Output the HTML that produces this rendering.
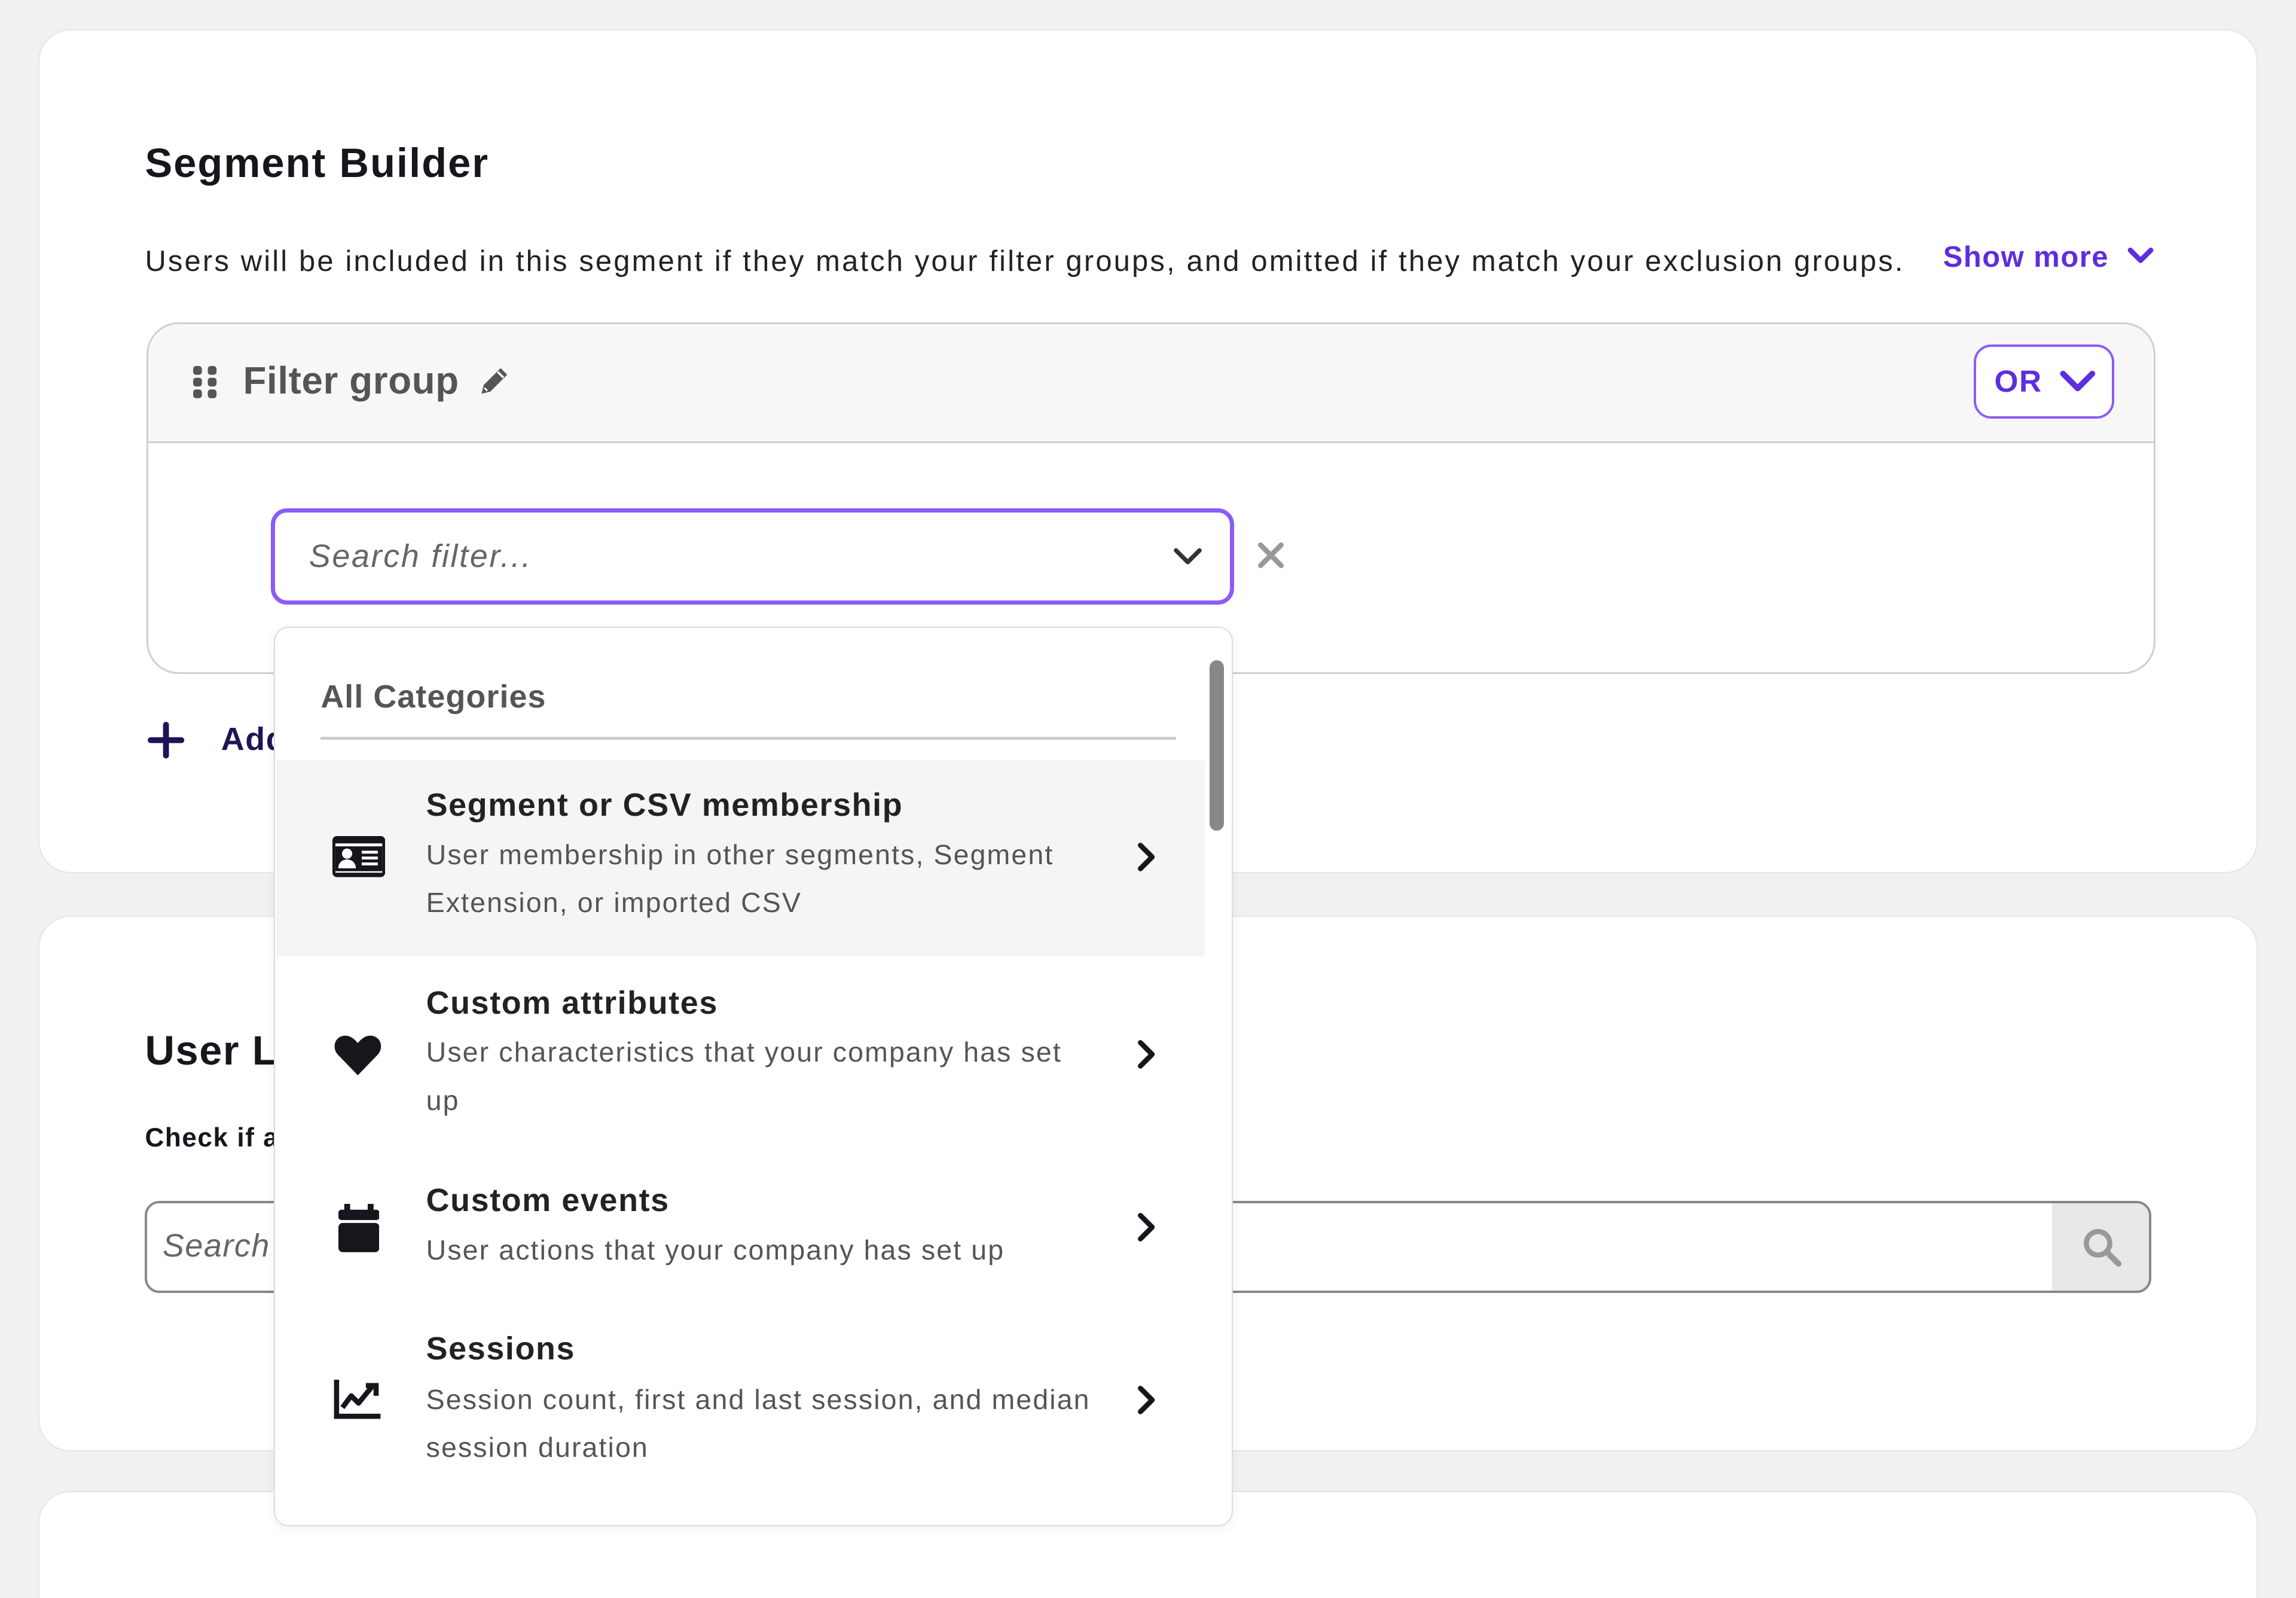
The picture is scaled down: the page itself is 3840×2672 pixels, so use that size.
<!DOCTYPE html>
<html><head><meta charset="utf-8"><style>
html,body{margin:0;padding:0;background:#f1f1f3;width:3840px;height:2672px;overflow:hidden}
#w{position:absolute;left:0;top:0;width:1568px;height:1091px;overflow:hidden;zoom:2.44898;font-family:"Liberation Sans",sans-serif;color:#16161d;letter-spacing:0.04em}
.a{position:absolute}
.card{position:absolute;left:26px;width:1516px;background:#fff;border:1px solid #e4e4e8;border-radius:22px;box-sizing:border-box}
.t{position:absolute;white-space:nowrap}
.it-t{font-size:22px;font-weight:bold;color:#222;letter-spacing:0.03em}
.it-d{font-size:19px;color:#555;line-height:33px;letter-spacing:0.045em}
</style></head><body><div id="w">
<div class="card" style="top:20px;height:576px"></div>
<div class="card" style="top:625px;height:366px"></div>
<div class="card" style="top:1018px;height:120px"></div>

<div class="t" style="left:99px;top:95px;font-size:28px;font-weight:bold;letter-spacing:0.03em">Segment Builder</div>
<div class="t" style="left:99px;top:167px;font-size:20px;color:#222;letter-spacing:0.064em">Users will be included in this segment if they match your filter groups, and omitted if they match your exclusion groups.</div>
<div class="t" style="left:1327px;top:164px;font-size:20px;font-weight:bold;color:#5d2de0;letter-spacing:0.03em">Show more</div>
<svg class="a" style="left:1453px;top:168px" width="18" height="14" viewBox="0 0 18 14"><path d="M2 3l7 7 7-7" fill="none" stroke="#5d2de0" stroke-width="3.5" stroke-linecap="round" stroke-linejoin="round"/></svg>

<div class="a" style="left:100px;top:220px;width:1372px;height:240px;border:1.5px solid #cfcfd3;border-radius:22px;box-sizing:border-box;overflow:hidden;background:#fff">
 <div class="a" style="left:0;top:0;right:0;height:80px;background:#f7f7f7;border-bottom:1.5px solid #cfcfd3"></div>
</div>
<svg class="a" style="left:132px;top:250px" width="17" height="22" viewBox="0 0 17 22"><g fill="#555"><rect x="0" y="0" width="6" height="6" rx="2"/><rect x="10" y="0" width="6" height="6" rx="2"/><rect x="0" y="8" width="6" height="6" rx="2"/><rect x="10" y="8" width="6" height="6" rx="2"/><rect x="0" y="16" width="6" height="6" rx="2"/><rect x="10" y="16" width="6" height="6" rx="2"/></g></svg>
<div class="t" style="left:166px;top:245px;font-size:26px;font-weight:bold;color:#555;letter-spacing:0.01em">Filter group</div>
<svg class="a" style="left:326px;top:248px" width="24" height="24" viewBox="0 0 24 24"><path d="M3 21l1.5-6L16 3.5l4.5 4.5L9 19.5z" fill="#555"/><path d="M14 6l4 4" stroke="#f7f7f7" stroke-width="1.5"/><path d="M5 17l2 2" stroke="#f7f7f7" stroke-width="1.2"/></svg>
<div class="a" style="left:1348px;top:235px;width:96px;height:51px;border:2px solid #8b5cf6;border-radius:12px;box-sizing:border-box;background:#fff"></div>
<div class="t" style="left:1362px;top:248px;font-size:21px;font-weight:bold;color:#5d2de0">OR</div>
<svg class="a" style="left:1406px;top:251px" width="26" height="18" viewBox="0 0 26 18"><path d="M3 4l10 10 10-10" fill="none" stroke="#5d2de0" stroke-width="4" stroke-linecap="round" stroke-linejoin="round"/></svg>

<div class="a" style="left:185px;top:347px;width:658px;height:66px;border:3px solid #8b5cf6;border-radius:11px;box-sizing:border-box;background:#fff"></div>
<div class="t" style="left:211px;top:367px;font-size:22px;font-style:italic;color:#666;letter-spacing:0.05em">Search filter...</div>
<svg class="a" style="left:801px;top:373px" width="20" height="14" viewBox="0 0 20 14"><path d="M2 3l8 8 8-8" fill="none" stroke="#333" stroke-width="3" stroke-linecap="round" stroke-linejoin="round"/></svg>
<svg class="a" style="left:858px;top:369px" width="20" height="20" viewBox="0 0 20 20"><path d="M3 3l14 14M17 3L3 17" stroke="#999" stroke-width="3.5" stroke-linecap="round"/></svg>

<svg class="a" style="left:101px;top:493px" width="25" height="25" viewBox="0 0 25 25"><path d="M12.5 2v21M2 12.5h21" stroke="#1f1456" stroke-width="4" stroke-linecap="round"/></svg>
<div class="t" style="left:151px;top:492px;font-size:22px;font-weight:bold;color:#1f1456">Add</div>

<div class="t" style="left:99px;top:701px;font-size:28px;font-weight:bold">User Lookup</div>
<div class="t" style="left:99px;top:767px;font-size:18px;font-weight:bold">Check if a user</div>
<div class="a" style="left:99px;top:820px;width:1370px;height:63px;border:2px solid #888;border-radius:10px;box-sizing:border-box;background:#fff;overflow:hidden">
 <div class="a" style="right:0;top:0;width:66px;height:100%;background:#e8e8e8"></div>
</div>
<div class="t" style="left:111px;top:838px;font-size:22px;font-style:italic;color:#666">Search</div>
<svg class="a" style="left:1422px;top:838px" width="28" height="28" viewBox="0 0 28 28"><circle cx="11" cy="11" r="8" fill="none" stroke="#999" stroke-width="3.5"/><path d="M17 17l8 8" stroke="#999" stroke-width="4" stroke-linecap="round"/></svg>

<div class="a" style="left:187px;top:428px;width:655px;height:614px;background:#fff;border:1px solid #dcdce0;border-radius:10px;box-sizing:border-box;box-shadow:0 2px 8px rgba(0,0,0,.06);overflow:hidden">
 <div class="a" style="left:1px;top:90px;width:634px;height:134px;background:#f5f5f5"></div>
</div>
<div class="a" style="left:826px;top:451px;width:10px;height:116px;background:#888;border-radius:5px"></div>
<div class="t" style="left:219px;top:463px;font-size:22px;font-weight:bold;color:#555;letter-spacing:0.02em">All Categories</div>
<div class="a" style="left:219px;top:503px;width:584px;height:2px;background:#ccc"></div>

<svg class="a" style="left:227px;top:571px" width="36" height="28" viewBox="0 0 36 28"><rect x="0" y="0" width="36" height="28" rx="3" fill="#16161d"/><rect x="2" y="5" width="32" height="20" fill="#fff"/><rect x="2" y="7" width="32" height="17" fill="#16161d"/><circle cx="10" cy="12" r="3.5" fill="#fff"/><path d="M4 22c0-4 3-6 6-6s6 2 6 6z" fill="#fff"/><path d="M20 11h11M20 15h11M20 19h11" stroke="#fff" stroke-width="2"/></svg>
<div class="t it-t" style="left:291px;top:537px">Segment or CSV membership</div>
<div class="t it-d" style="left:291px;top:567px">User membership in other segments, Segment<br>Extension, or imported CSV</div>

<svg class="a" style="left:228px;top:705px" width="33" height="30" viewBox="0 0 33 30"><path d="M16.5 29L3 15C-1 11 0 3 7 2c4-.5 7 2 9.5 5C19 4 22 1.5 26 2c7 1 8 9 4 13z" fill="#16161d"/></svg>
<div class="t it-t" style="left:291px;top:672px">Custom attributes</div>
<div class="t it-d" style="left:291px;top:702px">User characteristics that your company has set<br>up</div>

<svg class="a" style="left:231px;top:822px" width="28" height="33" viewBox="0 0 28 33"><rect x="4" y="0" width="4" height="6" fill="#16161d"/><rect x="20" y="0" width="4" height="6" fill="#16161d"/><rect x="0" y="4" width="28" height="7" rx="2" fill="#16161d"/><rect x="0" y="13" width="28" height="20" rx="3" fill="#16161d"/></svg>
<div class="t it-t" style="left:291px;top:807px">Custom events</div>
<div class="t it-d" style="left:291px;top:837px">User actions that your company has set up</div>

<svg class="a" style="left:228px;top:942px" width="33" height="27" viewBox="0 0 33 27"><path d="M2 0v25h30" fill="none" stroke="#16161d" stroke-width="3.5"/><path d="M6 19l6-8 5 5 9-11" fill="none" stroke="#16161d" stroke-width="3.5" stroke-linejoin="round"/><path d="M22 4h7v7" fill="none" stroke="#16161d" stroke-width="3.5"/></svg>
<div class="t it-t" style="left:291px;top:908px">Sessions</div>
<div class="t it-d" style="left:291px;top:939px">Session count, first and last session, and median<br>session duration</div>

<svg class="a" style="left:776px;top:574px" width="14" height="22" viewBox="0 0 14 22"><path d="M3 3l8 8-8 8" fill="none" stroke="#16161d" stroke-width="3.5" stroke-linecap="round" stroke-linejoin="round"/></svg>
<svg class="a" style="left:776px;top:709px" width="14" height="22" viewBox="0 0 14 22"><path d="M3 3l8 8-8 8" fill="none" stroke="#16161d" stroke-width="3.5" stroke-linecap="round" stroke-linejoin="round"/></svg>
<svg class="a" style="left:776px;top:827px" width="14" height="22" viewBox="0 0 14 22"><path d="M3 3l8 8-8 8" fill="none" stroke="#16161d" stroke-width="3.5" stroke-linecap="round" stroke-linejoin="round"/></svg>
<svg class="a" style="left:776px;top:945px" width="14" height="22" viewBox="0 0 14 22"><path d="M3 3l8 8-8 8" fill="none" stroke="#16161d" stroke-width="3.5" stroke-linecap="round" stroke-linejoin="round"/></svg>
</div></body></html>
